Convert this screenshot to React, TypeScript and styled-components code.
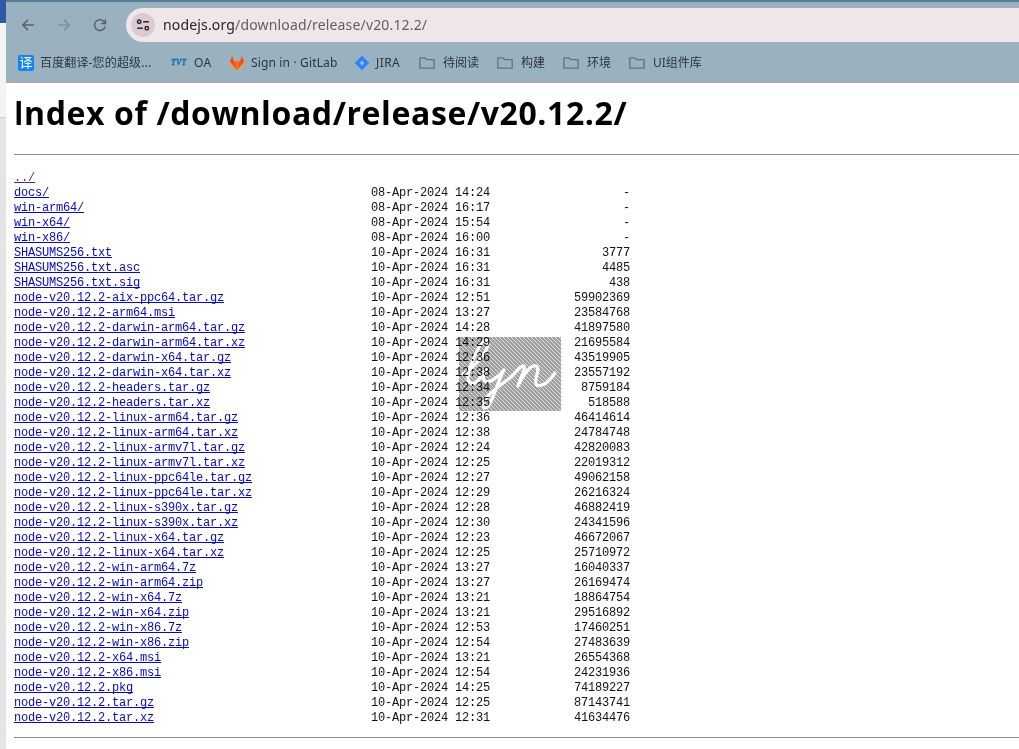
import React from "react";
import styled, { createGlobalStyle } from "styled-components";

const GlobalStyle = createGlobalStyle`
  * { box-sizing: border-box; }
  html, body { margin: 0; background: #fff; overflow: hidden; }
`;

const Screen = styled.div`
  position: relative;
  display: flex;
  width: 1019px;
  height: 749px;
  overflow: hidden;
  background: #fff;
`;

const BackWindow = styled.div`
  flex: 0 0 6px;
  display: flex;
  flex-direction: column;
`;

const BackPart = styled.div<{ $h?: number; $bg: string }>`
  ${(p) => (p.$h ? `height: ${p.$h}px;` : "flex: 1;")}
  background: ${(p) => p.$bg};
`;

const Browser = styled.div`
  flex: 1;
  min-width: 0;
  display: flex;
  flex-direction: column;
`;

const Chrome = styled.header`
  height: 83px;
  background: #9ab1c0;
  border-top: 2px solid #577c9b;
  border-bottom: 2px solid #aaa9b6;
  font-family: "Noto Sans", "Noto Sans CJK SC", sans-serif;
`;

const Toolbar = styled.div`
  display: flex;
  height: 46px;
  padding: 6px 0 6px 12px;
`;

const NavButton = styled.span`
  display: flex;
  align-items: center;
  justify-content: center;
  width: 20px;
  height: 34px;
  margin-right: 16px;
`;

const AddressBar = styled.div`
  display: flex;
  align-items: center;
  flex: 1;
  height: 34px;
  padding-left: 5px;
  border-radius: 17px 0 0 17px;
  background: #efe6ea;
`;

const SiteInfo = styled.span`
  display: flex;
  align-items: center;
  justify-content: center;
  width: 24px;
  height: 24px;
  border-radius: 12px;
  background: #dcc9d3;
`;

const Url = styled.span`
  margin-left: 8px;
  font-size: 14px;
  line-height: 20px;
  letter-spacing: 0.16px;
  color: #25222a;
  white-space: nowrap;
`;

const UrlPath = styled.span`
  color: #635d66;
`;

const Bookmarks = styled.nav`
  display: flex;
  align-items: center;
  height: 30px;
  padding-left: 12px;
`;

const Bookmark = styled.span<{ $w: number; $gap?: number; $ls?: number }>`
  flex: 0 0 ${(p) => p.$w}px;
  display: flex;
  align-items: center;
  gap: ${(p) => p.$gap ?? 6}px;
  font-size: 12px;
  line-height: 18px;
  letter-spacing: ${(p) => p.$ls ?? 0}px;
  color: #2b3540;
  white-space: nowrap;
`;

const TranslateIcon = styled.span`
  width: 16px;
  height: 16px;
  border-radius: 2px;
  background: #1684ef;
  color: #fff;
  font-size: 13px;
  line-height: 15px;
  letter-spacing: 0;
  text-align: center;
`;

const TvtMark = styled.span`
  width: 17px;
  font: italic bold 8px/12px "Liberation Serif", serif;
  letter-spacing: 0.2px;
  color: #176fb5;
  -webkit-text-stroke: 0.3px #176fb5;
`;

const Page = styled.main`
  flex: 1;
  padding: 0 0 0 8px;
  background: #fff;
`;

const Title = styled.h1`
  margin: 0;
  height: 71px;
  padding-top: 8px;
  font: bold 32px/43px "Open Sans", sans-serif;
  letter-spacing: 0.6px;
  white-space: nowrap;
  color: #000;
`;

const Capital = styled.span`
  font-family: Lato, sans-serif;
`;

const Rule = styled.div`
  height: 1px;
  background: #8c8c8c;
`;

const Listing = styled.div`
  padding: 16px 0 11px;
  font: 12px/15px "Liberation Mono", monospace;
  letter-spacing: -0.201px;
  color: #111;
`;

const Row = styled.div`
  display: grid;
  grid-template-columns: 357px 119px 140px;
  height: 15px;
  white-space: pre;
`;

const FileLink = styled.a<{ $visited?: boolean }>`
  justify-self: start;
  color: ${(p) => (p.$visited ? "#551a8b" : "#0808c0")};
  text-decoration: underline;
  text-decoration-thickness: 1px;
  text-underline-offset: 1px;
  text-decoration-skip-ink: none;
`;

const Size = styled.span`
  text-align: right;
`;

const Watermark = styled.svg`
  position: absolute;
  left: 459px;
  top: 337px;
  mix-blend-mode: multiply;
`;

const Folder = () => (
  <svg width="16" height="16" viewBox="0 0 16 16" fill="none" stroke="#66707c" strokeWidth="1.3">
    <path d="M.8 13.2V2.8h5l1.8 1.9h7.6v8.5z" strokeLinejoin="round" />
  </svg>
);

const files: [string, string, string][] = [
  ["docs/", "08-Apr-2024 14:24", "-"],
  ["win-arm64/", "08-Apr-2024 16:17", "-"],
  ["win-x64/", "08-Apr-2024 15:54", "-"],
  ["win-x86/", "08-Apr-2024 16:00", "-"],
  ["SHASUMS256.txt", "10-Apr-2024 16:31", "3777"],
  ["SHASUMS256.txt.asc", "10-Apr-2024 16:31", "4485"],
  ["SHASUMS256.txt.sig", "10-Apr-2024 16:31", "438"],
  ["node-v20.12.2-aix-ppc64.tar.gz", "10-Apr-2024 12:51", "59902369"],
  ["node-v20.12.2-arm64.msi", "10-Apr-2024 13:27", "23584768"],
  ["node-v20.12.2-darwin-arm64.tar.gz", "10-Apr-2024 14:28", "41897580"],
  ["node-v20.12.2-darwin-arm64.tar.xz", "10-Apr-2024 14:29", "21695584"],
  ["node-v20.12.2-darwin-x64.tar.gz", "10-Apr-2024 12:36", "43519905"],
  ["node-v20.12.2-darwin-x64.tar.xz", "10-Apr-2024 12:38", "23557192"],
  ["node-v20.12.2-headers.tar.gz", "10-Apr-2024 12:34", "8759184"],
  ["node-v20.12.2-headers.tar.xz", "10-Apr-2024 12:35", "518588"],
  ["node-v20.12.2-linux-arm64.tar.gz", "10-Apr-2024 12:36", "46414614"],
  ["node-v20.12.2-linux-arm64.tar.xz", "10-Apr-2024 12:38", "24784748"],
  ["node-v20.12.2-linux-armv7l.tar.gz", "10-Apr-2024 12:24", "42820083"],
  ["node-v20.12.2-linux-armv7l.tar.xz", "10-Apr-2024 12:25", "22019312"],
  ["node-v20.12.2-linux-ppc64le.tar.gz", "10-Apr-2024 12:27", "49062158"],
  ["node-v20.12.2-linux-ppc64le.tar.xz", "10-Apr-2024 12:29", "26216324"],
  ["node-v20.12.2-linux-s390x.tar.gz", "10-Apr-2024 12:28", "46882419"],
  ["node-v20.12.2-linux-s390x.tar.xz", "10-Apr-2024 12:30", "24341596"],
  ["node-v20.12.2-linux-x64.tar.gz", "10-Apr-2024 12:23", "46672067"],
  ["node-v20.12.2-linux-x64.tar.xz", "10-Apr-2024 12:25", "25710972"],
  ["node-v20.12.2-win-arm64.7z", "10-Apr-2024 13:27", "16040337"],
  ["node-v20.12.2-win-arm64.zip", "10-Apr-2024 13:27", "26169474"],
  ["node-v20.12.2-win-x64.7z", "10-Apr-2024 13:21", "18864754"],
  ["node-v20.12.2-win-x64.zip", "10-Apr-2024 13:21", "29516892"],
  ["node-v20.12.2-win-x86.7z", "10-Apr-2024 12:53", "17460251"],
  ["node-v20.12.2-win-x86.zip", "10-Apr-2024 12:54", "27483639"],
  ["node-v20.12.2-x64.msi", "10-Apr-2024 13:21", "26554368"],
  ["node-v20.12.2-x86.msi", "10-Apr-2024 12:54", "24231936"],
  ["node-v20.12.2.pkg", "10-Apr-2024 14:25", "74189227"],
  ["node-v20.12.2.tar.gz", "10-Apr-2024 12:25", "87143741"],
  ["node-v20.12.2.tar.xz", "10-Apr-2024 12:31", "41634476"],
];

export default function App() {
  return (
    <Screen>
      <GlobalStyle />
      <BackWindow>
        <BackPart $h={23} $bg="#3059a3" />
        <BackPart $h={94} $bg="#f3f3f5" />
        <BackPart $h={1} $bg="#d2d2d2" />
        <BackPart $bg="#e5e5e5" />
      </BackWindow>
      <Browser>
        <Chrome>
          <Toolbar>
            <NavButton>
              <svg width="14" height="14" viewBox="0 0 14 14" fill="none" stroke="#5d6269" strokeWidth="1.5">
                <path d="M12.8 7H1.8M6.9 1.9 1.8 7l5.1 5.1" />
              </svg>
            </NavButton>
            <NavButton>
              <svg width="14" height="14" viewBox="0 0 14 14" fill="none" stroke="#818e99" strokeWidth="1.5">
                <path d="M1.2 7h11M7.1 1.9 12.2 7l-5.1 5.1" />
              </svg>
            </NavButton>
            <NavButton>
              <svg width="14" height="14" viewBox="0 0 14 14" fill="none" stroke="#5d6269" strokeWidth="1.5">
                <path d="M12.2 8.4A5.4 5.4 0 1 1 11.4 4L12.4 5.4M12.4 1.2v4.4H8" />
              </svg>
            </NavButton>
            <AddressBar>
              <SiteInfo>
                <svg width="14" height="14" viewBox="0 0 14 14" fill="none" stroke="#30262e" strokeWidth="1.5">
                  <circle cx="3.2" cy="3.7" r="1.7" />
                  <path d="M7.2 3.7h5.6M1.2 10.2h5.6" />
                  <circle cx="10.8" cy="10.2" r="1.7" />
                </svg>
              </SiteInfo>
              <Url>
                nodejs.org<UrlPath>/download/release/v20.12.2/</UrlPath>
              </Url>
            </AddressBar>
          </Toolbar>
          <Bookmarks>
            <Bookmark $w={153} $ls={0.15}>
              <TranslateIcon>译</TranslateIcon>百度翻译-您的超级...
            </Bookmark>
            <Bookmark $w={58} $ls={0.4}>
              <TvtMark>TVT</TvtMark>OA
            </Bookmark>
            <Bookmark $w={125} $ls={0.15}>
              <svg width="16" height="16" viewBox="0 0 16 16">
                <path d="M3 1.2 5 6h6l2-4.8L15.7 9 8 15 .3 9z" fill="#fc6d26" />
                <path d="M3 1.2 5 6 8 15 1 6.7zM13 1.2 11 6 8 15l7-8.3z" fill="#e9502a" />
                <path d="M.3 9 1 7l7 8zM15.7 9 15 7l-7 8z" fill="#fca326" />
              </svg>
              Sign in · GitLab
            </Bookmark>
            <Bookmark $w={65} $ls={0.4}>
              <svg width="16" height="16" viewBox="0 0 16 16">
                <path d="M8 .8 15.2 8 8 15.2.8 8z" fill="#2684ff" />
                <path d="M8 5.5 10.5 8 8 10.5 5.5 8z" fill="#9ab9dc" />
              </svg>
              JIRA
            </Bookmark>
            <Bookmark $w={78} $gap={8}><Folder />待阅读</Bookmark>
            <Bookmark $w={66} $gap={8}><Folder />构建</Bookmark>
            <Bookmark $w={66} $gap={8}><Folder />环境</Bookmark>
            <Bookmark $w={80} $gap={8}><Folder />UI组件库</Bookmark>
          </Bookmarks>
        </Chrome>
        <Page>
          <Title><Capital>I</Capital>ndex of /download/release/v20.12.2/</Title>
          <Rule />
          <Listing>
            <Row>
              <FileLink $visited>../</FileLink>
            </Row>
            {files.map(([name, date, size]) => (
              <Row key={name}>
                <FileLink>{name}</FileLink>
                <span>{date}</span>
                <Size>{size}</Size>
              </Row>
            ))}
          </Listing>
          <Rule />
        </Page>
      </Browser>
      <Watermark width="102" height="74" viewBox="0 0 102 74">
        <defs>
          <pattern id="hatch" width="4" height="4" patternUnits="userSpaceOnUse">
            <rect width="4" height="4" fill="#a0a0a0" />
            <path d="M-1-1 5 5M-1 3 1 5M3-1 5 1" stroke="#dedede" strokeWidth="1" />
          </pattern>
        </defs>
        <rect width="102" height="74" fill="url(#hatch)" />
        <path
          d="M4 37C15 31 28 16 29 7C29 1 23 2 20 10C15 21 8 34 9 42C10 49 17 47 21 41L27 32C23 39 24 46 29 45C35 43 41 38 45 33C39 44 35 60 30 68C26 74 22 70 26 63C31 54 47 45 53 39C58 34 62 28 65 29C67 31 61 42 59 49C64 38 72 27 77 29C83 32 73 43 78 48C84 51 91 43 96 36"
          fill="none"
          stroke="#fff"
          strokeWidth="3.2"
          strokeLinecap="round"
          strokeLinejoin="round"
        />
      </Watermark>
    </Screen>
  );
}
